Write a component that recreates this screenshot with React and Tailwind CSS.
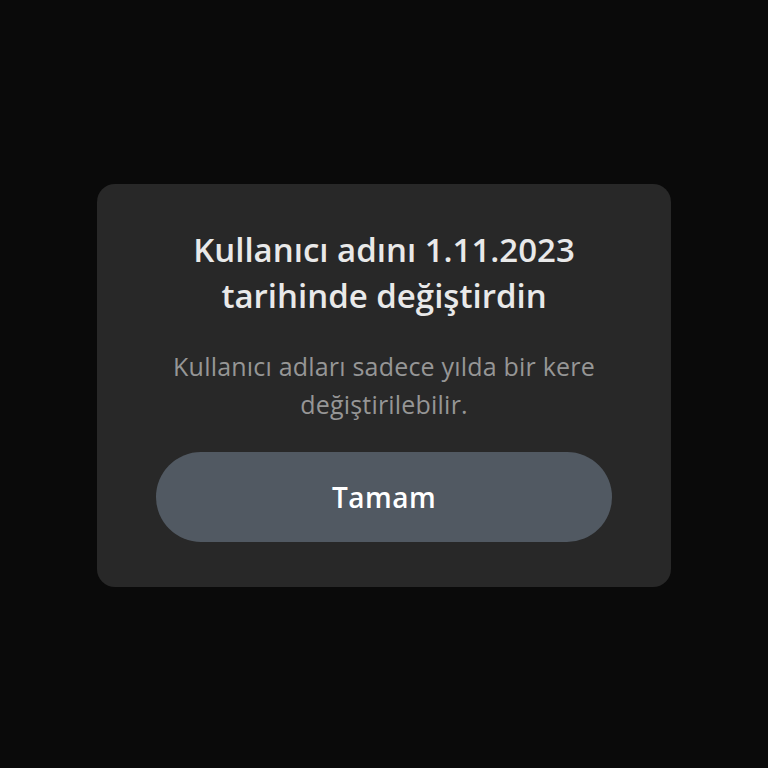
export default function App() {
  return (
    <div
      className="flex h-[768px] w-[768px] items-center justify-center bg-[#0a0a0a] pt-[2px]"
      style={{ fontFamily: "'Open Sans', 'Noto Sans', sans-serif" }}
    >
      <div className="flex w-[574px] flex-col items-center rounded-[18px] bg-[#282828] px-[59px] pt-[43px] pb-[45px]">
        <h1 className="text-center text-[33px] font-semibold leading-[46px] text-[#e9e9e9]">
          Kullanıcı adını 1.11.2023
          <br />
          tarihinde değiştirdin
        </h1>
        <p className="mt-[28px] text-center text-[25px] leading-[38px] tracking-[0.2px] text-[#969696]">
          Kullanıcı adları sadece yılda bir kere
          <br />
          değiştirilebilir.
        </p>
        <button className="mt-[29px] h-[90px] w-full rounded-full bg-[#515962] text-[28px] font-semibold tracking-[0.5px] text-white">
          Tamam
        </button>
      </div>
    </div>
  );
}
